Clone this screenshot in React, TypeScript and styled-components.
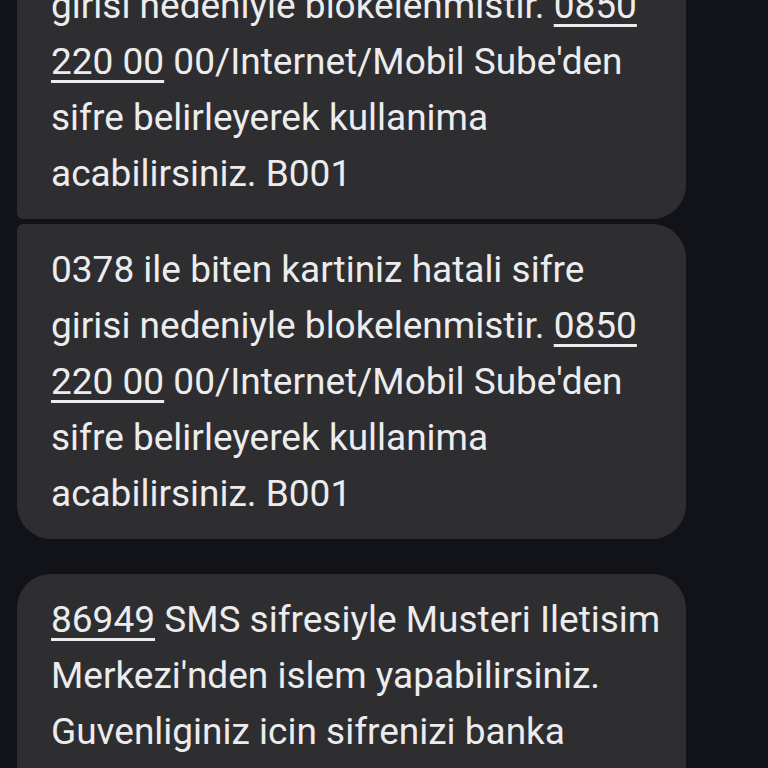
import React from 'react';
import styled, { createGlobalStyle } from 'styled-components';

const GlobalStyle = createGlobalStyle`
  html, body {
    margin: 0;
    padding: 0;
    background: #111318;
    overflow: hidden;
  }
`;

const Screen = styled.div`
  width: 768px;
  height: 768px;
  overflow: hidden;
  background: #111318;
  font-family: Roboto, "Noto Sans", sans-serif;
`;

const Thread = styled.div`
  display: flex;
  flex-direction: column;
  margin-top: -96px;
  padding-left: 17px;
`;

const Group = styled.div<{ $gapAfter?: number }>`
  display: flex;
  flex-direction: column;
  gap: 5px;
  margin-bottom: ${(p) => p.$gapAfter ?? 0}px;
`;

const Bubble = styled.div<{ $top: number; $bottom: number }>`
  width: 669px;
  box-sizing: border-box;
  background: #2e2e31;
  color: #ececee;
  padding: 18px 16px 17px 34px;
  font-size: 37px;
  line-height: 56px;
  border-radius: ${(p) => `${p.$top}px 34px 34px ${p.$bottom}px`};
`;

const Line = styled.div`
  white-space: nowrap;
`;

const Num = styled.span`
  text-decoration: underline;
  text-decoration-thickness: 3px;
  text-underline-offset: 6px;
`;

const BlockMessage: React.FC<{ top: number; bottom: number }> = ({ top, bottom }) => (
  <Bubble $top={top} $bottom={bottom}>
    <Line>0378 ile biten kartiniz hatali sifre</Line>
    <Line>
      girisi nedeniyle blokelenmistir. <Num>0850</Num>
    </Line>
    <Line>
      <Num>220 00</Num> 00/Internet/Mobil Sube'den
    </Line>
    <Line>sifre belirleyerek kullanima</Line>
    <Line>acabilirsiniz. B001</Line>
  </Bubble>
);

export default function App() {
  return (
    <Screen>
      <GlobalStyle />
      <Thread>
        <Group $gapAfter={35}>
          <BlockMessage top={34} bottom={6} />
          <BlockMessage top={6} bottom={34} />
        </Group>
        <Group>
          <Bubble $top={34} $bottom={6}>
            <Line>
              <Num>86949</Num> SMS sifresiyle Musteri Iletisim
            </Line>
            <Line>Merkezi'nden islem yapabilirsiniz.</Line>
            <Line>Guvenliginiz icin sifrenizi banka</Line>
            <Line>calisanlari dahil kimseyle paylasmayiniz.</Line>
          </Bubble>
        </Group>
      </Thread>
    </Screen>
  );
}
